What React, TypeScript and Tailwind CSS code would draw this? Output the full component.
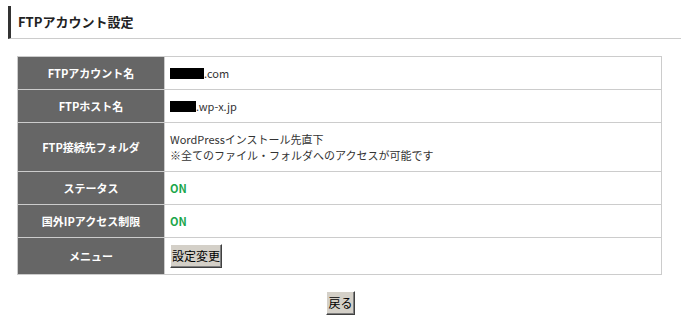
function Mask({ w }: { w: number }) {
  return <span className="inline-block bg-black h-[11px] align-[-1px]" style={{ width: w }} />;
}

function WinButton({ children }: { children: React.ReactNode }) {
  return (
    <button className="bg-[#d4d0c8] text-black text-[12px] leading-[16px] px-[1px] py-[3px] border border-t-white border-l-white border-r-[#404040] border-b-[#404040] shadow-[inset_-1px_-1px_0_#808080]">
      {children}
    </button>
  );
}

export default function App() {
  const data = [
    { label: "FTPアカウント名", value: <><Mask w={34} />.com</> },
    { label: "FTPホスト名", value: <><Mask w={26} />.wp-x.jp</> },
    {
      label: "FTP接続先フォルダ",
      value: (
        <>
          WordPressインストール先直下
          <br />
          ※全てのファイル・フォルダへのアクセスが可能です
        </>
      ),
    },
    { label: "ステータス", value: <span className="font-bold text-[#1aa64a]">ON</span> },
    { label: "国外IPアクセス制限", value: <span className="font-bold text-[#1aa64a]">ON</span> },
    { label: "メニュー", value: <WinButton>設定変更</WinButton>, button: true },
  ];

  return (
    <div className="w-[689px] h-[321px] bg-white text-[#333] font-['Noto_Sans_CJK_JP','Noto_Sans',sans-serif] text-[11px]">
      <div className="pt-[6px] px-[8px]">
        {/* Title */}
        <div className="h-[33px] border-l-[3px] border-l-[#333] border-b border-b-[#cccccc] pl-[7px] flex items-center">
          <h2 className="text-[13px] font-bold text-[#222]">FTPアカウント設定</h2>
        </div>

        {/* Settings table */}
        <table className="mt-[17px] ml-[9px] w-[645px] border-collapse">
          <tbody>
            {data.map((r) => (
              <tr key={r.label}>
                <th className="w-[147px] bg-[#666666] text-white font-bold text-[11px] leading-[16px] border border-[#cccccc] py-2 px-1 text-center">
                  {r.label}
                </th>
                <td
                  className={
                    r.button
                      ? "border border-[#cccccc] py-[6px] pl-[5px] pr-2 leading-[16px] text-[#333]"
                      : "border border-[#cccccc] py-2 pl-[5px] pr-2 leading-[16px] text-[#333]"
                  }
                >
                  {r.value}
                </td>
              </tr>
            ))}
          </tbody>
        </table>

        {/* Back */}
        <div className="flex justify-center mt-[16px] pr-[8px]">
          <WinButton>戻る</WinButton>
        </div>
      </div>
    </div>
  );
}
